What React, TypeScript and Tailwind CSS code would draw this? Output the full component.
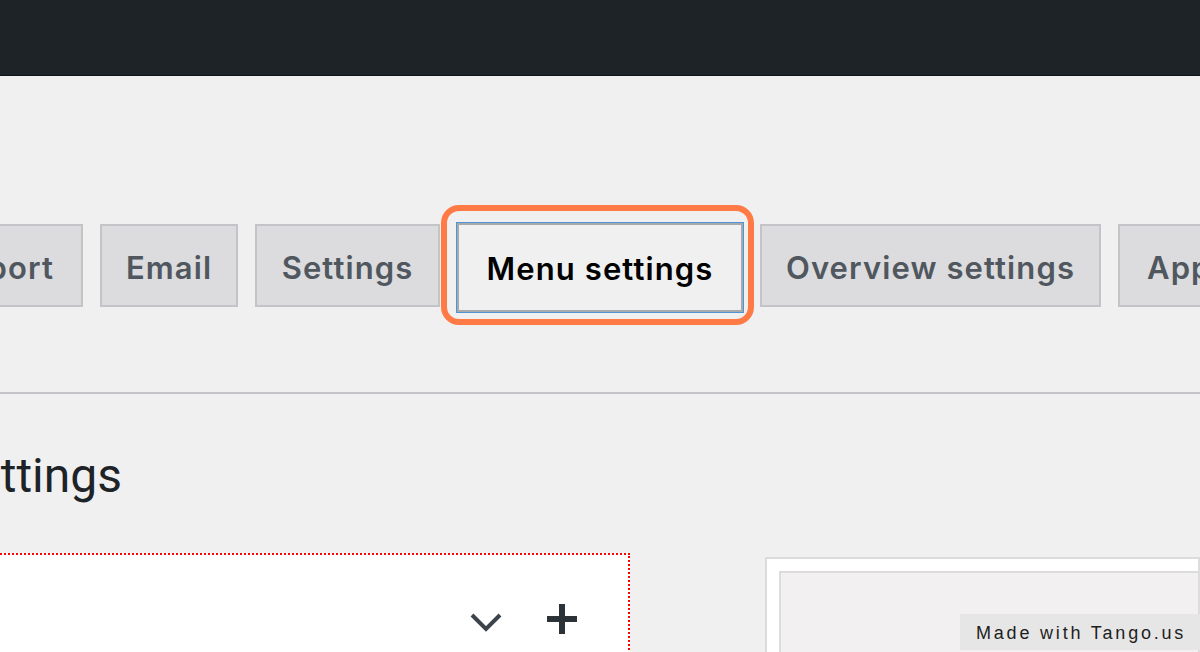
import React from 'react';

const tabs = [
    { label: 'Email', width: 138 },
    { label: 'Settings', width: 185 },
];

const tabBase =
    'flex items-center justify-center h-[83px] pt-[5px] border-2 border-[#c3c4c7] bg-[#dcdcde] text-[31px] tracking-[1.1px] font-semibold text-[#50575e] whitespace-nowrap shrink-0';

export default function App() {
    return (
        <div
            className="relative w-full h-[652px] overflow-hidden bg-[#f0f0f0]"
            style={{ fontFamily: 'Inter, "Noto Sans", Arial, sans-serif' }}
        >
            {/* admin bar */}
            <div className="h-[76px] bg-[#1d2327] border-b border-[#0f1214]" />

            {/* tab row */}
            <div className="mt-[148px] h-[170px] border-b-2 border-[#c3c4c7]">
                <div className="flex items-start gap-[17px]">
                    <div className="w-[83px] shrink-0 flex justify-end overflow-hidden">
                        <div className={tabBase + ' px-[27px]'}>Support</div>
                    </div>
                    {tabs.map((t) => (
                        <div key={t.label} className={tabBase} style={{ width: t.width }}>
                            {t.label}
                        </div>
                    ))}
                    <div className="relative shrink-0 -mt-px">
                        <div className="flex items-center justify-center w-[286px] h-[89px] pt-[3px] border-2 border-[#a7aaad] bg-[#f0f0f0] shadow-[0_0_0_1px_#4f94d4] text-[31px] tracking-[1.1px] font-semibold text-black whitespace-nowrap">
                            Menu settings
                        </div>
                        <div className="absolute -left-[16px] -right-[11px] -top-[18px] -bottom-[13px] rounded-[18px] border-[6px] border-[#ff7a45] pointer-events-none" />
                    </div>
                    <div className={tabBase + ' w-[341px]'}>Overview settings</div>
                    <div className={tabBase + ' w-[200px] justify-start px-[27px]'}>Appearance</div>
                </div>
            </div>

            {/* page heading */}
            <div className="w-[122px] flex justify-end overflow-hidden mt-[52px]">
                <h1
                    className="text-[48px] leading-[60px] font-normal text-[#1d2327] whitespace-nowrap"
                    style={{ fontFamily: 'Roboto, Inter, sans-serif' }}
                >
                    Menu settings
                </h1>
            </div>

            {/* panels */}
            <div className="flex items-start mt-[47px]">
                <div className="w-[630px] h-[120px] shrink-0 bg-white border-t-2 border-r-2 border-dotted border-[#ff0000] flex justify-end items-start pt-[48px] pr-[50px] gap-[44px]">
                    <svg width="32" height="20" viewBox="0 0 32 20" className="mt-[9px]">
                        <path d="M2 3 L16 17 L30 3" fill="none" stroke="#3c434a" strokeWidth="4" />
                    </svg>
                    <svg width="32" height="32" viewBox="0 0 32 32">
                        <path d="M16 1 V31 M1 16 H31" fill="none" stroke="#2c3338" strokeWidth="6" />
                    </svg>
                </div>
                <div className="ml-[135px] mt-[4px] flex-1 h-[120px] bg-white border-2 border-[#dcdcde] pt-[12px] pl-[12px]">
                    <div className="h-full bg-[#f2f0f1] border-2 border-[#dcdcde] border-r-0 border-b-0" />
                </div>
            </div>

            {/* watermark */}
            <div
                className="absolute right-0 bottom-[2px] w-[240px] h-[36px] bg-[#e6e6e6] flex items-center pl-[16px] pt-[3px] text-[18px] tracking-[2.8px] text-[#1e1e1e]"
                style={{ fontFamily: '"Liberation Sans", Arial, sans-serif' }}
            >
                Made with Tango.us
            </div>
        </div>
    );
}
